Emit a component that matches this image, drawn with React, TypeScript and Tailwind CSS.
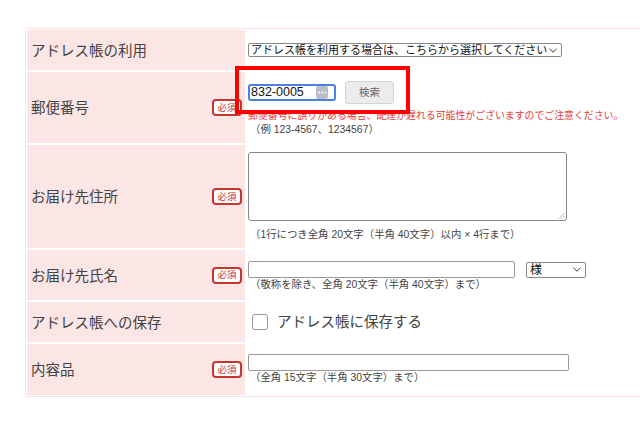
import React from 'react';

const Required: React.FC = () => (
    <span className="flex h-[17px] w-[30px] items-center justify-center rounded-[4px] border-2 border-[#c8352f] bg-white text-[9.5px] leading-none text-[#c8352f]">
        必須
    </span>
);

const Chevron: React.FC = () => (
    <svg width="8" height="5" viewBox="0 0 8 5" className="shrink-0">
        <path d="M0.5 0.8 L4 4.2 L7.5 0.8" fill="none" stroke="#333" strokeWidth="1" />
    </svg>
);

interface RowProps {
    label: string;
    required?: boolean;
    height: string;
    children: React.ReactNode;
}

const Row: React.FC<RowProps> = ({ label, required, height, children }) => (
    <>
        <div className={`flex items-center justify-between bg-[#fbe5e5] pl-[4px] pr-[3px] ${height}`}>
            <span className="pt-[2px] text-[14.5px] leading-none text-[#444]">{label}</span>
            {required && <Required />}
        </div>
        <div className={`flex flex-col justify-center bg-white pl-[1px] ${height}`}>{children}</div>
    </>
);

const Note: React.FC<{ children: React.ReactNode; className?: string }> = ({ children, className }) => (
    <p className={`whitespace-nowrap pl-[2px] text-[10.4px] leading-[14px] text-[#444] ${className ?? ''}`}>{children}</p>
);

export default function App() {
    return (
        <div className="relative h-[427px] w-[640px] overflow-hidden bg-white font-['Liberation_Sans','Noto_Sans_CJK_JP',sans-serif]">
            <div className="pl-[25px] pt-[28px]">
                <div className="grid w-[680px] grid-cols-[218px_1fr] gap-[2px] border border-[#fbe3e3] p-[1px]">
                    <Row label="アドレス帳の利用" height="h-[40px]">
                        <div className="flex h-[14px] w-[314px] items-center justify-between rounded-[2px] border border-[#888] bg-white pl-[2px] pr-[4px]">
                            <span className="text-[11px] leading-none text-[#111]">
                                アドレス帳を利用する場合は、こちらから選択してください
                            </span>
                            <Chevron />
                        </div>
                    </Row>

                    <Row label="郵便番号" required height="h-[71px]">
                        <div className="flex items-center gap-[9px] pt-[3px]">
                            <div className="flex h-[17px] w-[88px] items-center justify-between rounded-[3px] border-2 border-[#4a80e0] bg-white pl-[1px] pr-[6px]">
                                <span className="text-[12.5px] leading-none text-[#111]">832-0005</span>
                                <span className="flex h-[13px] w-[12px] items-center justify-center rounded-[2px] bg-[#b9bdc9]">
                                    <svg width="9" height="3" viewBox="0 0 9 3">
                                        <circle cx="1.2" cy="1.5" r="0.9" fill="#fff" />
                                        <circle cx="4.2" cy="1.5" r="0.9" fill="#fff" />
                                        <circle cx="7.2" cy="1.5" r="0.9" fill="#fff" />
                                    </svg>
                                </span>
                            </div>
                            <div className="flex h-[23px] w-[49px] items-center justify-center rounded-[3px] border border-[#d4d4d4] bg-[#ececec] text-[10.5px] text-[#666]">
                                検索
                            </div>
                        </div>
                        <p className="mt-[5px] whitespace-nowrap text-[9.9px] leading-[14px] text-[#e53b3b]">
                            郵便番号に誤りがある場合、配達が遅れる可能性がございますのでご注意ください。
                        </p>
                        <Note>（例 123-4567、1234567）</Note>
                    </Row>

                    <Row label="お届け先住所" required height="h-[103px]">
                        <div className="relative h-[69px] w-[319px] rounded-[3px] border border-[#888] bg-white">
                            <svg width="7" height="7" viewBox="0 0 7 7" className="absolute bottom-[1px] right-[1px]">
                                <path d="M6.5 1 L1 6.5 M6.5 4 L4 6.5" stroke="#999" strokeWidth="0.8" />
                            </svg>
                        </div>
                        <Note className="mt-[7px]">（1行につき全角 20文字（半角 40文字）以内 × 4行まで）</Note>
                    </Row>

                    <Row label="お届け先氏名" required height="h-[50px]">
                        <div className="flex items-center gap-[11px] pt-[3px]">
                            <div className="h-[17px] w-[267px] rounded-[2px] border border-[#999] bg-white" />
                            <div className="flex h-[16px] w-[60px] items-center justify-between rounded-[2px] border border-[#888] bg-white pl-[3px] pr-[4px]">
                                <span className="text-[12px] leading-none text-[#111]">様</span>
                                <Chevron />
                            </div>
                        </div>
                        <Note>（敬称を除き、全角 20文字（半角 40文字）まで）</Note>
                    </Row>

                    <Row label="アドレス帳への保存" height="h-[40px]">
                        <div className="flex items-center gap-[9px] pl-[4px]">
                            <span className="h-[16px] w-[16px] rounded-[3px] border border-[#999] bg-white" />
                            <span className="pt-[1px] text-[14.5px] leading-none text-[#444]">アドレス帳に保存する</span>
                        </div>
                    </Row>

                    <Row label="内容品" required height="h-[51px]">
                        <div className="h-[17px] w-[321px] rounded-[2px] border border-[#999] bg-white" />
                        <Note>（全角 15文字（半角 30文字）まで）</Note>
                    </Row>
                </div>
            </div>

            {/* highlight over the zip code field */}
            <div className="absolute left-[235px] top-[66px] h-[48px] w-[175px] border-[4px] border-[#ff0000]" />
        </div>
    );
}
